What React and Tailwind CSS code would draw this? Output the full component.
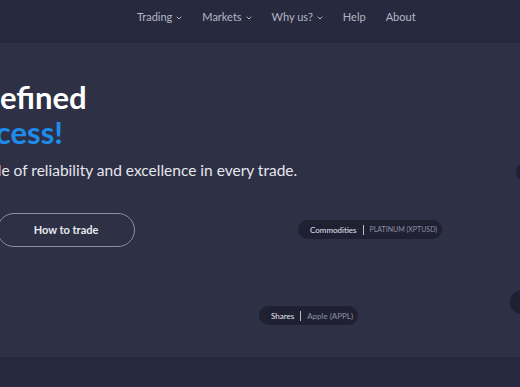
import React from 'react';

const navItems = [
    { label: 'Trading', menu: true },
    { label: 'Markets', menu: true },
    { label: 'Why us?', menu: true },
    { label: 'Help', menu: false },
    { label: 'About', menu: false },
];

const Chevron = () => (
    <svg width="6" height="4" viewBox="0 0 6 4" className="ml-[4px] mt-[1px]">
        <path d="M1 1l2 2 2-2" fill="none" stroke="currentColor" strokeWidth="1" strokeLinecap="round" />
    </svg>
);

const Tag = ({ kind, name, nameSize, className }) => (
    <div className={`absolute flex items-center h-[19px] rounded-full bg-[#1f2133] pl-[12px] pr-[5px] text-[8px] ${className}`}>
        <span className="text-[#e4e5ee]">{kind}</span>
        <span className="mx-[6px] h-[10px] w-px bg-[#b9bbca]" />
        <span className={`text-[#8d8fa3] ${nameSize}`}>{name}</span>
    </div>
);

const App = () => {
    return (
        <div
            className="w-[520px] h-[387px] overflow-hidden bg-[#272a3e]"
            style={{ fontFamily: 'Lato, "Noto Sans", sans-serif' }}
        >
            <nav className="h-[43px] flex items-start pt-[9px] pl-[137px] gap-[20px] text-[11px] text-[#b4b6c6]">
                {navItems.map((item) => (
                    <div key={item.label} className="flex items-center">
                        {item.label}
                        {item.menu && <Chevron />}
                    </div>
                ))}
            </nav>

            <section className="relative h-[314px] bg-[#2e3045] pt-[37px]">
                <div className="-ml-[53px]">
                    <h1 className="text-[31px] leading-[35px] font-bold text-white">Redefined</h1>
                    <h1 className="text-[31px] leading-[35px] font-bold text-[#1e8cec]">Success!</h1>
                </div>
                <p className="mt-[9px] -ml-[48px] text-[15.5px] leading-[22px] text-[#e6e6ee]">
                    Example of reliability and excellence in every trade.
                </p>

                <button className="mt-[32px] -ml-[3px] w-[138px] h-[34px] rounded-full border border-[#8c8ea2] text-[11px] font-bold text-[#e8e9f0]">
                    How to trade
                </button>

                <Tag kind="Commodities" name="PLATINUM (XPTUSD)" nameSize="text-[7px]" className="left-[298px] top-[177px]" />
                <Tag kind="Shares" name="Apple (APPL)" nameSize="text-[8px]" className="left-[259px] top-[263px]" />

                <div className="absolute left-[516px] top-[120px] w-[60px] h-[18px] rounded-full bg-[#1f2133]" />
                <div className="absolute left-[510px] top-[247px] w-[60px] h-[24px] rounded-full bg-[#1f2133]" />
            </section>
        </div>
    );
};

export default App;
